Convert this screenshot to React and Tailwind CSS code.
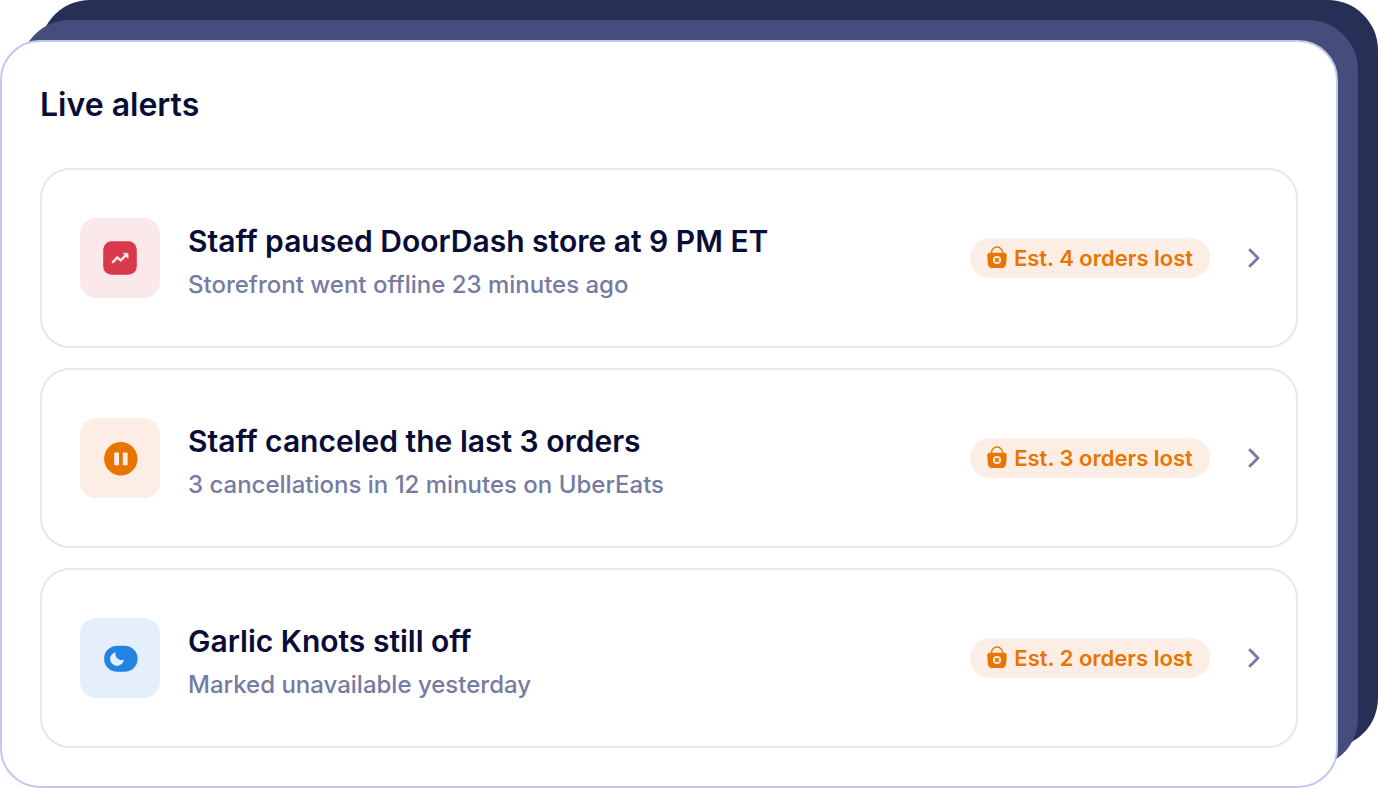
const alerts = [
  {
    id: "paused",
    title: "Staff paused DoorDash store at 9 PM ET",
    detail: "Storefront went offline 23 minutes ago",
    lost: "Est. 4 orders lost",
    tile: "bg-[#fae8ea]",
    icon: TrendIcon,
  },
  {
    id: "canceled",
    title: "Staff canceled the last 3 orders",
    detail: "3 cancellations in 12 minutes on UberEats",
    lost: "Est. 3 orders lost",
    tile: "bg-[#fceee5]",
    icon: PauseIcon,
  },
  {
    id: "item-off",
    title: "Garlic Knots still off",
    detail: "Marked unavailable yesterday",
    lost: "Est. 2 orders lost",
    tile: "bg-[#e5effc]",
    icon: SnoozeIcon,
  },
];

function TrendIcon() {
  return (
    <svg viewBox="0 0 40 40" className="w-10 h-10" aria-hidden="true">
      <rect x="3.2" y="3.2" width="33.6" height="33.6" rx="8.4" fill="#d93a4b" />
      <path
        d="M12.9 24.1 L17.4 19.4 L20.6 22.5 L26 17.2"
        fill="none"
        stroke="#fae8ea"
        strokeWidth="2.4"
        strokeLinecap="round"
        strokeLinejoin="round"
      />
      <path
        d="M22.9 15.2 H27.4 Q28.1 15.2 28.1 15.9 V20.4 Z"
        fill="#fae8ea"
        stroke="#fae8ea"
        strokeWidth="0.6"
        strokeLinejoin="round"
      />
    </svg>
  );
}

function PauseIcon() {
  return (
    <svg viewBox="0 0 40 40" className="w-10 h-10" aria-hidden="true">
      <circle cx="20.8" cy="20.8" r="16.7" fill="#e87500" />
      <rect x="14.2" y="14.6" width="4.8" height="12.6" rx="0.6" fill="#fceee5" />
      <rect x="22.8" y="14.6" width="4.8" height="12.6" rx="0.6" fill="#fceee5" />
    </svg>
  );
}

function SnoozeIcon() {
  return (
    <svg viewBox="0 0 40 40" className="w-10 h-10" aria-hidden="true">
      <rect x="4.1" y="7.7" width="33.5" height="26" rx="13" fill="#2383e2" />
      <path
        d="M15.8 14.2 A6.9 6.9 0 1 0 23.9 21.6 A6 6 0 0 1 15.8 14.2 Z"
        fill="#e5effc"
      />
    </svg>
  );
}

function BagIcon() {
  return (
    <svg viewBox="0 0 20 24" className="w-5 h-6 shrink-0" aria-hidden="true">
      <path
        d="M4.4 9 V6.6 A5.6 5.6 0 0 1 15.6 6.6 V9"
        fill="none"
        stroke="#e87500"
        strokeWidth="1.4"
      />
      <path
        d="M3 6.8 H17 Q19.8 6.8 19.7 9.6 Q19.6 14.6 18.9 18.8 Q18.2 21.9 15.2 21.9 H4.8 Q1.8 21.9 1.1 18.8 Q0.4 14.6 0.3 9.6 Q0.2 6.8 3 6.8 Z"
        fill="#e87500"
      />
      <circle cx="10" cy="14" r="4.1" fill="#fceee5" />
      <path
        d="M8.6 12.6 L11.4 15.4 M11.4 12.6 L8.6 15.4"
        stroke="#e87500"
        strokeWidth="1.7"
        strokeLinecap="round"
      />
    </svg>
  );
}

function ChevronIcon() {
  return (
    <svg
      viewBox="0 0 12 20"
      className="w-3 h-5 ml-[38px] shrink-0"
      fill="none"
      stroke="#757ba3"
      strokeWidth="2.8"
      strokeLinejoin="round"
      aria-hidden="true"
    >
      <path d="M1.2 1.2 L10 10 L1.2 18.8" />
    </svg>
  );
}

function AlertCard({ alert }) {
  const Icon = alert.icon;

  return (
    <li>
      <button
        type="button"
        className="w-full h-[180px] flex items-center pl-[38px] pr-9 text-left bg-white border-2 border-[#e8e8e8] rounded-[30px] cursor-pointer"
      >
        <span
          className={`w-20 h-20 shrink-0 flex items-center justify-center rounded-2xl ${alert.tile}`}
        >
          <Icon />
        </span>

        <span className="flex-1 min-w-0 ml-7 flex flex-col gap-1 pt-2.5">
          <span className="text-[30px] leading-10 font-semibold text-[#080d35]">
            {alert.title}
          </span>
          <span className="text-2xl leading-10 font-medium text-[#757ba3]">
            {alert.detail}
          </span>
        </span>

        {/* Lost orders badge */}
        <span className="w-60 h-10 shrink-0 flex items-center justify-center gap-[7px] rounded-full bg-[#fceee5] text-[#e87500]">
          <BagIcon />
          <span className="text-[22px] leading-7 font-semibold whitespace-nowrap">
            {alert.lost}
          </span>
        </span>

        <ChevronIcon />
      </button>
    </li>
  );
}

export default function App() {
  return (
    <div className="relative pt-10 pr-10 bg-white font-[Inter,sans-serif]">
      {/* Stacked sheets behind the panel */}
      <div className="absolute top-0 right-0 bottom-10 left-10 rounded-[50px] bg-[#282f56]" />
      <div className="absolute top-5 right-5 bottom-5 left-5 rounded-[50px] bg-[#444d7c]" />

      <main className="relative px-[38px] pt-[43px] pb-[38px] bg-white border-2 border-[#c0caee] rounded-[40px]">
        <h1 className="mb-[43px] text-[32px] leading-10 font-semibold text-[#080d35]">
          Live alerts
        </h1>
        <ul className="flex flex-col gap-5">
          {alerts.map((alert) => (
            <AlertCard key={alert.id} alert={alert} />
          ))}
        </ul>
      </main>
    </div>
  );
}
